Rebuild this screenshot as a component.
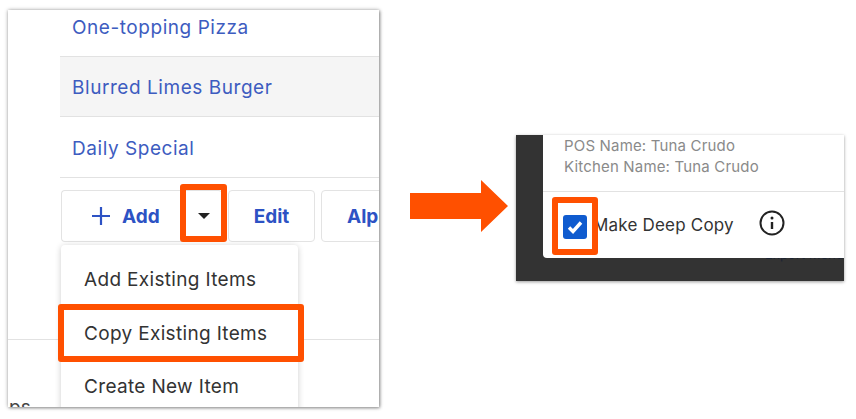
<style>
:global(body) { margin: 0; background: #fff; }
.page { width: 856px; height: 419px; display: flex; align-items: flex-start; font-family: Inter, "Liberation Sans", sans-serif; overflow: hidden; position: relative; }
.left { position: relative; margin: 10px 0 0 8px; width: 371px; height: 397px; flex: none; background: #fff; box-shadow: 0 0 4px rgba(0,0,0,.3), 1px 1px 3px rgba(0,0,0,.35); overflow: hidden; }
.list { margin-left: 52px; }
.row { box-sizing: border-box; height: 60px; display: flex; align-items: center; padding-left: 12px; padding-top: 2px; border-bottom: 1px solid #e2e2e2; color: #3d5cc0; font-size: 19px; letter-spacing: .55px; }
.row.first { height: 47px; padding-top: 0; padding-bottom: 12px; }
.row.alt { background: #f5f5f5; }
.row.last { height: 61px; }
.actions { display: flex; gap: 6px; margin: 12px 0 0 1px; }
.btn { flex: none; height: 52px; box-sizing: border-box; border: 1px solid #e3e3e3; border-radius: 4px; display: flex; align-items: center; justify-content: center; font-weight: 700; color: #2d52c4; font-size: 19px; background: #fff; }
.add { width: 161px; justify-content: flex-start; padding-left: 30px; gap: 12px; border-right: 0; }
.edit { width: 87px; }
.alp { width: 100px; justify-content: flex-start; padding-left: 25px; }
.caret { margin-left: 26px; width: 0; height: 0; border: 6px solid transparent; border-top: 6px solid #222; border-bottom: 0; }
.rule { position: absolute; left: 0; right: 0; top: 329px; height: 1px; background: #e2e2e2; }
.ps { position: absolute; left: 1px; top: 386px; color: #444; font-size: 19px; }
.menu { position: absolute; left: 53px; top: 235px; width: 237px; height: 170px; background: #fff; border-radius: 4px; box-shadow: 0 1px 6px rgba(0,0,0,.2); padding-top: 8px; box-sizing: border-box; }
.item { height: 53.5px; display: flex; align-items: center; padding-left: 23px; font-size: 19px; letter-spacing: .33px; color: #333; }
.mark { position: absolute; border: 6px solid #ff5000; border-radius: 3px; box-sizing: border-box; z-index: 2; }
.m1 { left: 172px; top: 174px; width: 47px; height: 58px; }
.m2 { left: 50px; top: 294px; width: 246px; height: 58px; }
.arrow { margin: 180px 0 0 31px; flex: none; }
.right { position: relative; margin: 135px 0 0 8px; width: 328px; height: 146px; flex: none; background: #333; box-shadow: 0 1px 3px rgba(0,0,0,.4); }
.dialog { position: relative; z-index: 1; margin-left: 27px; height: 123px; background: #fff; border-radius: 0 0 0 4px; }
.names { height: 57px; box-sizing: border-box; padding: 0 0 0 21px; border-bottom: 1px solid #e2e2e2; color: #8a8a8a; font-size: 15px; line-height: 21px; letter-spacing: .17px; }
.deep { display: flex; align-items: center; height: 66px; padding-left: 20px; color: #333; font-size: 17px; letter-spacing: .2px; }
.box { width: 24px; height: 24px; margin-top: 4px; background: #0f5bcf; border-radius: 3px; display: flex; align-items: center; justify-content: center; flex: none; }
.label { margin-left: 6px; }
.info { margin: 0 0 4px 25px; }
.m3 { left: 36px; top: 62px; width: 46px; height: 58px; }
.under { position: absolute; left: 249px; top: 111px; font-size: 13px; line-height: 16px; white-space: nowrap; color: #1c2433; }
</style>

<div class="page">
  <section class="left">
    <div class="list">
      <div class="row first">One-topping Pizza</div>
      <div class="row alt">Blurred Limes Burger</div>
      <div class="row last">Daily Special</div>
      <div class="actions">
        <div class="btn add">
          <svg width="18" height="18" viewBox="0 0 18 18"><path d="M9 0v18M0 9h18" stroke="#2d52c4" stroke-width="2.2" fill="none"/></svg>
          <span>Add</span>
          <i class="caret"></i>
        </div>
        <div class="btn edit">Edit</div>
        <div class="btn alp">Alpha</div>
      </div>
    </div>
    <div class="rule"></div>
    <div class="ps">ps</div>
    <div class="menu">
      <div class="item">Add Existing Items</div>
      <div class="item">Copy Existing Items</div>
      <div class="item">Create New Item</div>
    </div>
    <div class="mark m1"></div>
    <div class="mark m2"></div>
  </section>
  <svg class="arrow" width="98" height="52" viewBox="0 0 98 52"><path d="M0 13h71V0l27 26-27 26V39H0z" fill="#ff5000"/></svg>
  <section class="right">
    <div class="dialog">
      <div class="names">POS Name: Tuna Crudo<br/>Kitchen Name: Tuna Crudo</div>
      <div class="deep">
        <span class="box"><svg width="16" height="14" viewBox="0 0 16 14"><path d="M2 7.5l4 4 8-9" stroke="#fff" stroke-width="3.4" fill="none"/></svg></span>
        <span class="label">Make Deep Copy</span>
        <svg class="info" width="26" height="26" viewBox="0 0 26 26"><circle cx="13" cy="13" r="11.5" stroke="#222" stroke-width="2" fill="none"/><path d="M13 12v7" stroke="#222" stroke-width="2.4"/><circle cx="13" cy="8" r="1.5" fill="#222"/></svg>
      </div>
    </div>
    <div class="mark m3"></div>
    <div class="under">Export Menu</div>
  </section>
</div>
